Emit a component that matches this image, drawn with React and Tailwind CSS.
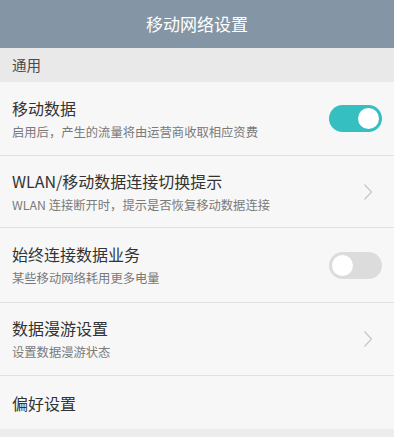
import React, { useState } from 'react';

const Toggle = ({ on, onChange }) => (
  <button
    onClick={onChange}
    className={`relative w-[53px] h-[27px] rounded-full shrink-0 ${on ? 'bg-[#35bfc0]' : 'bg-[#dcdcdc]'}`}
  >
    <span
      className={`absolute top-[3px] w-[21px] h-[21px] rounded-full bg-white ${on ? 'left-[29px]' : 'left-[3px]'}`}
    />
  </button>
);

const Chevron = () => (
  <svg width="10" height="18" viewBox="0 0 10 18" className="shrink-0 mr-[9px]">
    <path d="M1.5 1.5 L8.5 9 L1.5 16.5" fill="none" stroke="#c6c6c6" strokeWidth="1.2" />
  </svg>
);

const Row = ({ title, sub, right, h }) => (
  <div className={`flex items-center justify-between pl-3 pr-3 border-b border-[#e2e2e2] ${h}`}>
    <div className="flex flex-col">
      <div className="text-[16px] leading-[22px] text-[#333333]">{title}</div>
      {sub && <div className="text-[12.3px] leading-[18px] text-[#7a7a7a] mt-[4px]">{sub}</div>}
    </div>
    {right}
  </div>
);

export default function App() {
  const [mobile, setMobile] = useState(true);
  const [always, setAlways] = useState(false);

  return (
    <div className="w-[394px] h-[437px] bg-[#ececec] overflow-hidden" style={{ fontFamily: '"Noto Sans CJK SC", "Noto Sans", sans-serif' }}>
      <div className="h-[48px] bg-[#8495a5] flex items-center justify-center text-white text-[17px]">
        移动网络设置
      </div>
      <div className="h-[34px] bg-[#e9e9e9] flex items-center pl-3 text-[14.5px] text-[#4a4a4a]">
        通用
      </div>
      <div className="bg-[#f7f7f7]">
        <Row
          h="h-[74px]"
          title="移动数据"
          sub="启用后，产生的流量将由运营商收取相应资费"
          right={<Toggle on={mobile} onChange={() => setMobile(!mobile)} />}
        />
        <Row
          h="h-[72px]"
          title="WLAN/移动数据连接切换提示"
          sub="WLAN 连接断开时，提示是否恢复移动数据连接"
          right={<Chevron />}
        />
        <Row
          h="h-[75px]"
          title="始终连接数据业务"
          sub="某些移动网络耗用更多电量"
          right={<Toggle on={always} onChange={() => setAlways(!always)} />}
        />
        <Row
          h="h-[73px]"
          title="数据漫游设置"
          sub="设置数据漫游状态"
          right={<Chevron />}
        />
        <div className="h-[53px] flex items-center pl-3 text-[16px] text-[#333333]">偏好设置</div>
      </div>
    </div>
  );
}
